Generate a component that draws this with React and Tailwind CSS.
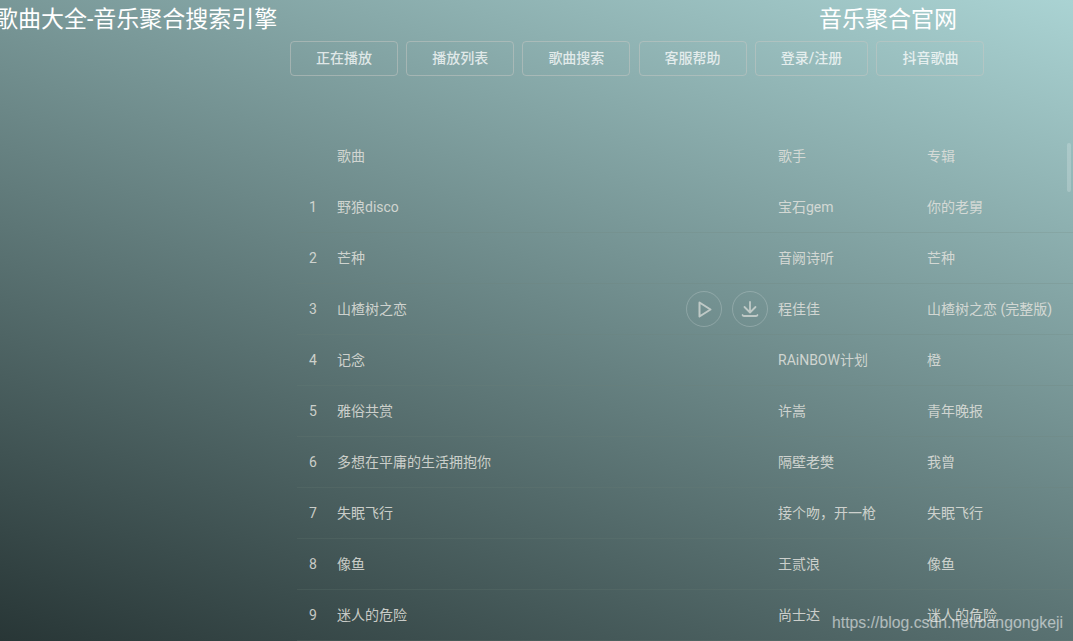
import React from 'react';

const songs = [
  ['野狼disco', '宝石gem', '你的老舅'],
  ['芒种', '音阙诗听', '芒种'],
  ['山楂树之恋', '程佳佳', '山楂树之恋 (完整版)'],
  ['记念', 'RAiNBOW计划', '橙'],
  ['雅俗共赏', '许嵩', '青年晚报'],
  ['多想在平庸的生活拥抱你', '隔壁老樊', '我曾'],
  ['失眠飞行', '接个吻，开一枪', '失眠飞行'],
  ['像鱼', '王贰浪', '像鱼'],
  ['迷人的危险', '尚士达', '迷人的危险'],
];

const tabs = ['正在播放', '播放列表', '歌曲搜索', '客服帮助', '登录/注册', '抖音歌曲'];

const RoundBtn = ({ children }) => (
  <span className="flex h-9 w-9 items-center justify-center rounded-full border border-white/20 text-[#d8dcd8]/75">{children}</span>
);

const App = () => {
  return (
    <div className="relative h-screen overflow-hidden bg-[linear-gradient(200deg,#aad3d3_0%,#283636_100%)] font-['Roboto','Noto_Sans_CJK_SC',sans-serif] text-sm text-[#e2e2de]/85">
      <header className="flex h-[41px] items-start text-[23px] leading-[40px] whitespace-nowrap text-white">
        <h1 className="-ml-[5px] w-[824px] shrink-0">歌曲大全-音乐聚合搜索引擎</h1>
        <h2>音乐聚合官网</h2>
      </header>

      <nav className="ml-[290px] flex gap-[8.2px]">
        {tabs.map((t) => (
          <a key={t} className="block h-[35px] rounded-sm border border-[#c8c8c4]/50 px-[25px] leading-[33px] font-medium whitespace-nowrap text-white/75">
            {t}
          </a>
        ))}
      </nav>

      <div className="mt-[55px] ml-[297px]">
        <div className="grid h-[51px] grid-cols-[40px_441px_149px_1fr] items-center pb-[2px]">
          <span></span>
          <span>歌曲</span>
          <span>歌手</span>
          <span>专辑</span>
        </div>
        {songs.map((s, i) => (
          <div key={s[0]} className="grid h-[51px] grid-cols-[40px_441px_149px_1fr] items-center border-b border-[#6f8478]/20 whitespace-nowrap">
            <span className="pl-3">{i + 1}</span>
            <span className="flex items-center justify-between pr-[10px]">
              {s[0]}
              {i === 2 && (
                <span className="flex gap-[10px]">
                  <RoundBtn>
                    <svg width="16" height="18" viewBox="0 0 16 18" fill="none" stroke="currentColor" strokeWidth="2" strokeLinejoin="round">
                      <path d="M3.5 2.5 L14.5 9.5 L3.5 16.5 Z" />
                    </svg>
                  </RoundBtn>
                  <RoundBtn>
                    <svg width="18" height="18" viewBox="0 0 18 18" fill="none" stroke="currentColor" strokeWidth="1.8" strokeLinecap="round" strokeLinejoin="round">
                      <path d="M9 2 V12 M3.5 7 L9 12.5 L14.5 7 M1.5 15 q0.3 1 1.5 1 h12 q1.2 0 1.5 -1" />
                    </svg>
                  </RoundBtn>
                </span>
              )}
            </span>
            <span>{s[1]}</span>
            <span>{s[2]}</span>
          </div>
        ))}
      </div>

      <div className="absolute top-[143px] right-[2px] h-[49px] w-[4px] rounded-full bg-white/20"></div>
      <div className="absolute top-[613px] left-[832px] font-['Liberation_Sans',sans-serif] text-[15.8px] leading-[20px] whitespace-nowrap text-white/55">
        https://blog.csdn.net/bangongkeji
      </div>
    </div>
  );
};

export default App;
